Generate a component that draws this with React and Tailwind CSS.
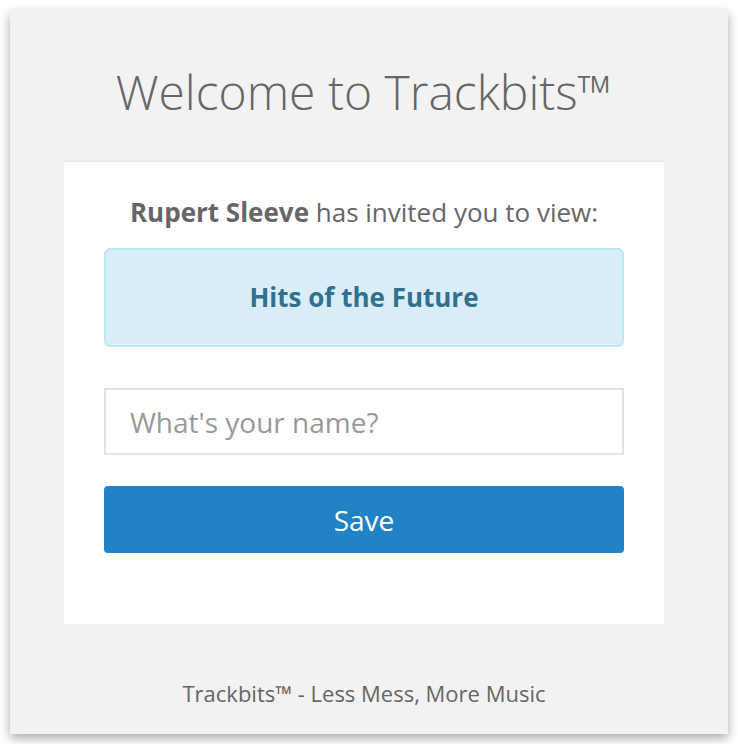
import React from 'react';

const App = () => {
  return (
    <div className="min-h-screen bg-white p-[10px] font-['Open_Sans',sans-serif]">
      <div className="flex h-[724px] flex-col bg-[#f2f2f2] pl-[54px] pr-[64px] shadow-[0_4px_10px_rgba(0,0,0,0.35)]">
        {/* Title */}
        <h1 className="flex h-[150px] items-center justify-center pt-[14px] text-[48px] font-light text-[#666]">
          Welcome to Trackbits™
        </h1>

        {/* Invite box */}
        <div className="border-t-2 border-[#e6e9ec] bg-white px-[40px] pt-[32px] pb-[71px]">
          <p className="text-center text-[26px] leading-[36px] text-[#666]">
            <span className="font-bold">Rupert Sleeve</span> has invited you to view:
          </p>
          <div className="mt-[18px] flex h-[99px] items-center justify-center rounded-[6px] border-2 border-[#bce8f1] bg-[#d9edf7]">
            <span className="text-[26px] font-bold text-[#31708f]">Hits of the Future</span>
          </div>
          <input
            type="text"
            placeholder="What's your name?"
            className="mt-[41px] block h-[67px] w-full border-2 border-[#e3e3e3] bg-white px-[24px] text-[28px] text-[#555] outline-none placeholder:text-[#999]"
          />
          <button className="mt-[31px] block h-[67px] w-full rounded-[4px] bg-[#1f83c6] text-[28px] text-white">
            Save
          </button>
        </div>

        {/* Footer */}
        <div className="flex flex-1 items-center justify-center pt-[28px]">
          <p className="text-[22px] text-[#666]">Trackbits™ - Less Mess, More Music</p>
        </div>
      </div>
    </div>
  );
};

export default App;
